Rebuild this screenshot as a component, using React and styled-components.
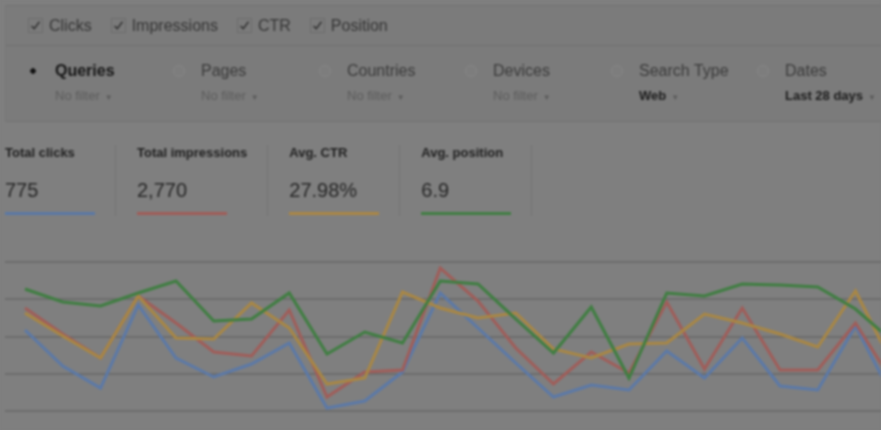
import React from 'react';
import styled, { createGlobalStyle } from 'styled-components';

const GlobalStyle = createGlobalStyle`
    html, body {
        margin: 0;
        padding: 0;
        background: #7f7f7f;
        font-family: "Liberation Sans", Arial, sans-serif;
        overflow: hidden;
    }
`;

const Page = styled.div`
    width: 881px;
    height: 430px;
    background: #7f7f7f;
    filter: blur(1.1px);
    overflow: hidden;
`;

const Panel = styled.div`
    margin: 5px 0 0 5px;
    background: #7b7b7b;
    border-top: 1px solid #727272;
    border-left: 1px solid #767676;
    border-bottom: 1px solid #727272;
`;

const CheckRow = styled.div`
    display: flex;
    align-items: center;
    height: 39px;
    padding-left: 22px;
    gap: 19px;
    border-bottom: 1px solid #6f6f6f;
`;

const CheckItem = styled.label`
    display: flex;
    align-items: center;
    gap: 6px;
    font-size: 16px;
    color: #353535;
`;

const Box = styled.span`
    width: 13px;
    height: 13px;
    border: 1px solid #6c6c6c;
    display: flex;
    align-items: center;
    justify-content: center;
`;

const DimRow = styled.div`
    display: flex;
    padding: 16px 0 18px 21px;
`;

const Dim = styled.div`
    flex: 0 0 146px;
    display: grid;
    grid-template-columns: 28px auto;
    row-gap: 8px;
    align-items: center;
`;

const Radio = styled.span`
    width: 12px;
    height: 12px;
    border-radius: 50%;
    box-sizing: border-box;
    border: 1px solid ${p => (p.$on ? 'transparent' : '#878787')};
    background: ${p => (p.$on ? 'radial-gradient(circle, #111 0 2.5px, transparent 3px)' : '#7d7d7d')};
`;

const DimName = styled.span`
    font-size: 16px;
    font-weight: ${p => (p.$on ? 700 : 400)};
    color: ${p => (p.$on ? '#151515' : '#3a3a3a')};
`;

const Filter = styled.span`
    grid-column: 2;
    font-size: 13px;
    font-weight: ${p => (p.$set ? 700 : 400)};
    color: ${p => (p.$set ? '#1c1c1c' : '#5c5c5c')};
    white-space: nowrap;
`;

const Caret = styled.span`
    font-size: 8px;
    margin-left: 5px;
    color: #5a5a5a;
`;

const Metrics = styled.div`
    display: flex;
    margin: 23px 0 0 5px;
    height: 71px;
`;

const Metric = styled.div`
    display: flex;
    flex-direction: column;
    min-width: 90px;
    padding: 0 20px 0 ${p => (p.$first ? 0 : 21)}px;
    border-right: 1px solid #747474;
`;

const MetricLabel = styled.div`
    font-size: 13px;
    font-weight: 700;
    color: #1f1f1f;
    white-space: nowrap;
`;

const MetricValue = styled.div`
    font-size: 20px;
    color: #262626;
    margin-top: 19px;
`;

const Bar = styled.div`
    width: 90px;
    height: 3px;
    margin-top: 10px;
    background: ${p => p.$color};
`;

const Chart = styled.svg`
    display: block;
    margin-top: 30px;
`;

const metrics = [
    { label: 'Total clicks', value: '775', color: '#5a78a6' },
    { label: 'Total impressions', value: '2,770', color: '#a05c58' },
    { label: 'Avg. CTR', value: '27.98%', color: '#aa8644' },
    { label: 'Avg. position', value: '6.9', color: '#417e43' }
];

const dims = [
    { name: 'Queries', filter: 'No filter', on: true },
    { name: 'Pages', filter: 'No filter' },
    { name: 'Countries', filter: 'No filter' },
    { name: 'Devices', filter: 'No filter' },
    { name: 'Search Type', filter: 'Web', set: true },
    { name: 'Dates', filter: 'Last 28 days', set: true }
];

const series = [
    { color: '#5b79a8', ys: [329, 365, 387, 304, 357, 376, 363, 342, 407, 400, 371, 292, 327, 362, 396, 384, 389, 350, 377, 337, 385, 389, 325, 397] },
    { color: '#a05d59', ys: [307, 333, 357, 295, 322, 351, 355, 309, 396, 371, 369, 267, 300, 347, 383, 351, 372, 301, 368, 307, 369, 369, 322, 382] },
    { color: '#a98744', ys: [312, 335, 357, 295, 337, 338, 302, 327, 383, 377, 291, 307, 317, 312, 348, 357, 343, 342, 313, 322, 333, 346, 290, 365] },
    { color: '#3f7e41', ys: [288, 301, 305, 292, 280, 320, 318, 292, 353, 331, 342, 280, 283, 318, 352, 306, 377, 292, 295, 283, 284, 286, 308, 341] }
];

const CHART_TOP = 245;
const gridYs = [261, 298, 336, 373, 410];

const Check = () => (
    <svg width="11" height="11" viewBox="0 0 11 11">
        <path d="M1.5 6 L4.2 8.6 L9.5 1.8" fill="none" stroke="#2e2e2e" strokeWidth="1.4" />
    </svg>
);

const App = () => (
    <Page>
        <GlobalStyle />
        <Panel>
            <CheckRow>
                {['Clicks', 'Impressions', 'CTR', 'Position'].map(name => (
                    <CheckItem key={name}>
                        <Box><Check /></Box>
                        {name}
                    </CheckItem>
                ))}
            </CheckRow>
            <DimRow>
                {dims.map(d => (
                    <Dim key={d.name}>
                        <Radio $on={d.on} />
                        <DimName $on={d.on}>{d.name}</DimName>
                        <Filter $set={d.set}>{d.filter}<Caret>▼</Caret></Filter>
                    </Dim>
                ))}
            </DimRow>
        </Panel>
        <Metrics>
            {metrics.map((m, i) => (
                <Metric key={m.label} $first={i === 0}>
                    <MetricLabel>{m.label}</MetricLabel>
                    <MetricValue>{m.value}</MetricValue>
                    <Bar $color={m.color} />
                </Metric>
            ))}
        </Metrics>
        <Chart width="881" height="185" viewBox="0 0 881 185">
            {gridYs.map(y => (
                <line key={y} x1="5" x2="881" y1={y - CHART_TOP} y2={y - CHART_TOP} stroke="#6c6c6c" strokeWidth="2" />
            ))}
            {series.map(s => (
                <polyline
                    key={s.color}
                    fill="none"
                    stroke={s.color}
                    strokeWidth="3"
                    strokeLinejoin="miter"
                    points={s.ys.map((y, i) => `${25 + i * 37.75},${y - CHART_TOP}`).join(' ')}
                />
            ))}
        </Chart>
    </Page>
);

export default App;
